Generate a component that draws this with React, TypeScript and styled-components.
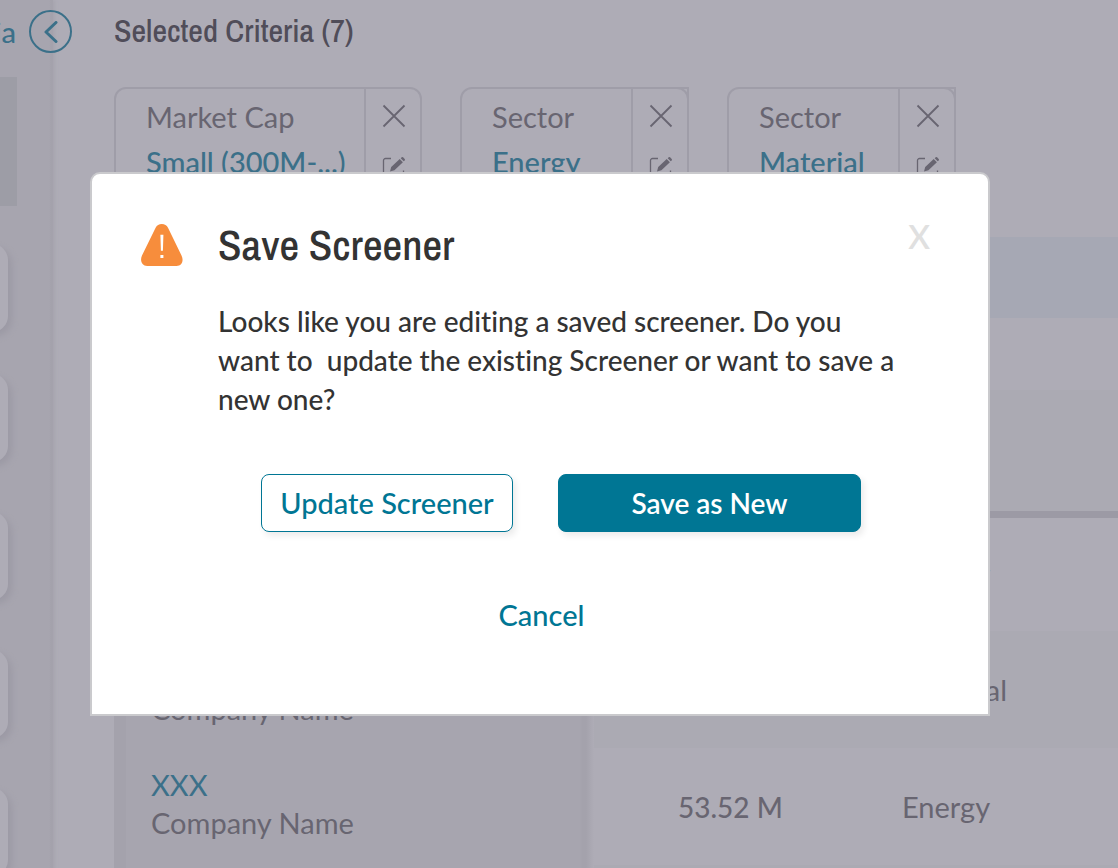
import React from "react";
import styled, { createGlobalStyle, css } from "styled-components";

const color = {
  page: "#aeacb6",
  panel: "#a7a5af",
  panelEdge: "#a4a2ac",
  stripe: "#abaab3",
  block: "#9d9da6",
  line: "#9c9aa5",
  chipLine: "#9f9da8",
  band: "#a6a8b4",
  mutedText: "#686571",
  mutedHeading: "#504d59",
  mutedTeal: "#3b7089",
  teal: "#007694",
  text: "#333333",
  white: "#ffffff",
};

const GlobalStyle = createGlobalStyle`
  *, *::before, *::after { box-sizing: border-box; }
  body {
    margin: 0;
    background: ${color.page};
    color: ${color.mutedText};
    font-family: Lato, "Liberation Sans", sans-serif;
    font-size: 29px;
    font-variant-ligatures: none;
    line-height: 38px;
  }
  button {
    font: inherit;
    padding: 0;
    border: 0;
    background: none;
    cursor: pointer;
  }
`;

const headingFont = css`
  font-family: "Archivo Narrow", "Roboto Condensed", "Liberation Sans", sans-serif;
  font-weight: 500;
  margin: 0;
`;

const Page = styled.div`
  display: grid;
  grid-template-columns: 53px minmax(0, 1fr);
  height: 100vh;
  overflow: hidden;
`;

const Sidebar = styled.aside`
  position: relative;
  z-index: 1;
  background: linear-gradient(to right, ${color.panel} 49px, ${color.panelEdge} 51px);
  box-shadow: 2px 0 3px ${color.panel};
`;

const SidebarHeader = styled.div`
  display: flex;
  align-items: center;
  justify-content: flex-end;
  gap: 13px;
  height: 77px;
  padding-bottom: 14px;
  font-weight: 500;
  color: ${color.mutedTeal};
`;

const CollapseButton = styled.button`
  flex: none;
  display: flex;
  align-items: center;
  justify-content: center;
  width: 43px;
  height: 43px;
  margin-right: -19px;
  border: 2px solid ${color.mutedTeal};
  border-radius: 50%;
  color: ${color.mutedTeal};
`;

const ActiveFilter = styled.div`
  width: 17px;
  height: 129px;
  margin-bottom: 38px;
  background: ${color.block};
`;

const FilterList = styled.div`
  display: grid;
  gap: 50px;
`;

const FilterGroup = styled.div`
  display: grid;
  gap: 42px;
`;

const FilterCard = styled.div`
  width: 48px;
  height: 88px;
  margin-left: -40px;
  border-radius: 16px;
  background: ${color.page};
  box-shadow: 4px 4px 6px ${color.line};
`;

const Main = styled.main`
  padding-left: 61px;
`;

const PageTitle = styled.h1`
  ${headingFont}
  height: 87px;
  padding-top: 12px;
  font-size: 32px;
  color: ${color.mutedHeading};
`;

const ChipRow = styled.div`
  display: flex;
  gap: 38px;
  height: 150px;
`;

const Chip = styled.section<{ $width: number }>`
  display: flex;
  width: ${(p) => p.$width}px;
  height: 112px;
  border: 2px solid ${color.chipLine};
  border-radius: 12px;
`;

const ChipText = styled.div`
  flex: 1;
  padding: 9px 0 0 30px;
  white-space: nowrap;
`;

const ChipLabel = styled.div`
  margin-bottom: 7px;
`;

const ChipValue = styled.div`
  color: ${color.mutedTeal};
  font-weight: 500;
`;

const ChipActions = styled.div<{ $square?: boolean }>`
  display: flex;
  flex-direction: column;
  align-items: center;
  gap: 28px;
  width: 56px;
  padding: 15px 0 0 2px;
  border-left: 2px solid ${color.chipLine};
  ${(p) =>
    p.$square &&
    css`
      width: 58px;
      margin: -2px -2px 0 0;
      border-top: 2px solid ${color.chipLine};
      border-right: 2px solid ${color.chipLine};
    `}
`;

const IconButton = styled.button`
  display: block;
  width: 24px;
  height: 24px;
  color: ${color.mutedText};

  svg { display: block; }
`;

const Band = styled.div`
  height: 81px;
  margin-bottom: 72px;
  background: ${color.band};
`;

const Table = styled.table`
  width: 100%;
  table-layout: fixed;
  border-collapse: collapse;
  text-align: left;
`;

const HeadCell = styled.th<{ $width?: number }>`
  width: ${(p) => (p.$width ? `${p.$width}px` : "auto")};
  height: 124px;
  padding: 0;
  background: ${color.stripe};
  border-bottom: 7px solid ${color.line};
`;

const NameCell = styled.th`
  padding: 0 0 6px 37px;
  font-weight: 400;
  background: linear-gradient(
    to right,
    ${color.panelEdge} 12px,
    ${color.panel} 12px,
    ${color.panel} 466px,
    ${color.panelEdge} 468px,
    ${color.panelEdge} 472px,
    ${color.page}
  );
`;

const Row = styled.tr`
  height: 117px;

  &:nth-child(even) { background: ${color.stripe}; }
  &:nth-child(even) ${NameCell} { padding-bottom: 0; }
`;

const Cell = styled.td`
  padding: 0 0 0 84px;
`;

const Figure = styled.span`
  font-size: 28px;
  font-weight: 500;
`;

const Ticker = styled.a`
  display: block;
  color: ${color.mutedTeal};
  text-decoration: none;
`;

const Overlay = styled.div`
  position: fixed;
  inset: 0;
  z-index: 2;
  padding: 172px 128px 0 90px;
`;

const Dialog = styled.div`
  display: grid;
  grid-template-columns: 42px minmax(0, 1fr);
  column-gap: 35px;
  padding: 50px 58px 80px 49px;
  border: 2px solid #cacacd;
  border-radius: 10px 10px 0 0;
  background: ${color.white};
  color: ${color.text};

  > svg { display: block; }
`;

const DialogHeader = styled.header`
  display: flex;
  justify-content: space-between;
  margin-bottom: 37px;
`;

const DialogTitle = styled.h2`
  ${headingFont}
  font-size: 43px;
  line-height: 41px;
`;

const CloseButton = styled.button`
  height: 24px;
  font-size: 33px;
  font-weight: 600;
  line-height: 24px;
  color: #e0e0e0;
`;

const Message = styled.p`
  max-width: 690px;
  margin: 0 -10px 55px 0;
  font-size: 28px;
  font-weight: 500;
  line-height: 39px;
`;

const ButtonRow = styled.div`
  grid-column: 1 / -1;
  display: flex;
  justify-content: center;
  gap: 45px;
  margin-bottom: 64px;
  padding-left: 51px;
`;

const ActionButton = styled.button<{ $primary?: boolean }>`
  width: ${(p) => (p.$primary ? 303 : 252)}px;
  height: 58px;
  border: 1px solid ${color.teal};
  border-radius: 8px;
  background: ${(p) => (p.$primary ? color.teal : color.white)};
  color: ${(p) => (p.$primary ? color.white : color.teal)};
  font-size: ${(p) => (p.$primary ? 28 : 29)}px;
  font-weight: ${(p) => (p.$primary ? 600 : 500)};
  box-shadow: 3px 4px 6px rgba(0, 0, 0, 0.08);
`;

const CancelButton = styled.button`
  grid-column: 1 / -1;
  justify-self: center;
  margin-left: 12px;
  font-weight: 500;
  color: ${color.teal};
`;

const CrossIcon = () => (
  <svg width="24" height="24" viewBox="0 0 24 24" fill="none" stroke="currentColor" strokeWidth="1.8" aria-hidden="true">
    <path d="M1.5 1.5l21 21M22.5 1.5l-21 21" />
  </svg>
);

const EditIcon = () => (
  <svg width="24" height="24" viewBox="0 0 24 24" aria-hidden="true">
    <path d="M9 2.500H3.500a2 2 0 0 0-2 2v15a2 2 0 0 0 2 2h16a2 2 0 0 0 2-2v-5" fill="none" stroke="currentColor" strokeWidth="1.300" />
    <path d="M8 15.500l1.200-4.500 8.500-8 3.200 3.300-8.500 8zM18.700 2.200l1-.9a1 1 0 0 1 1.400 0l1.600 1.700a1 1 0 0 1 0 1.400l-1 .9z" fill="currentColor" />
  </svg>
);

const WarningIcon = () => (
  <svg width="42" height="42" viewBox="0 0 42 42" aria-hidden="true">
    <path d="M14.600 3.800a7 7 0 0 1 12.400 0L40.500 31.500C43 36.500 41 42 35.500 42H6.200C.8 42-1.300 36.500 1 31.500z" fill="#f78d3c" />
    <path d="M19.400 10.800h3l-.5 16h-2zM19.400 31h3v3h-3z" fill="#fff" />
  </svg>
);

const criteria = [
  { label: "Market Cap", value: "Small (300M-...)", width: 308, square: false },
  { label: "Sector", value: "Energy", width: 229, square: true },
  { label: "Sector", value: "Material", width: 229, square: true },
];

const sectors = ["Energy", "Material", "Energy"];

export default function App() {
  return (
    <>
      <GlobalStyle />
      <Page>
        <Sidebar>
          <SidebarHeader>
            <span>Criteria</span>
            <CollapseButton type="button" aria-label="Collapse criteria">
              <svg width="14" height="22" viewBox="0 0 14 22" fill="none" stroke="currentColor" strokeWidth="3" strokeLinecap="round" strokeLinejoin="round" aria-hidden="true">
                <path d="M12 1.500L2 11l10 9.500" />
              </svg>
            </CollapseButton>
          </SidebarHeader>
          <ActiveFilter />
          <FilterList>
            <FilterGroup>
              <FilterCard />
              <FilterCard />
            </FilterGroup>
            <FilterCard />
            <FilterCard />
            <FilterCard />
          </FilterList>
        </Sidebar>
        <Main>
          <PageTitle>Selected Criteria (7)</PageTitle>
          <ChipRow>
            {criteria.map((c) => (
              <Chip key={c.value} $width={c.width}>
                <ChipText>
                  <ChipLabel>{c.label}</ChipLabel>
                  <ChipValue>{c.value}</ChipValue>
                </ChipText>
                <ChipActions $square={c.square}>
                  <IconButton type="button" aria-label={`Remove ${c.value}`}>
                    <CrossIcon />
                  </IconButton>
                  <IconButton type="button" aria-label={`Edit ${c.value}`}>
                    <EditIcon />
                  </IconButton>
                </ChipActions>
              </Chip>
            ))}
          </ChipRow>
          <Band />
          <Table>
            <thead>
              <tr>
                <HeadCell scope="col" $width={480} aria-label="Company" />
                <HeadCell scope="col" $width={224} aria-label="Market cap" />
                <HeadCell scope="col" aria-label="Sector" />
              </tr>
            </thead>
            <tbody>
              {sectors.map((sector, i) => (
                <Row key={i}>
                  <NameCell scope="row">
                    <Ticker href="#company">XXX</Ticker>
                    Company Name
                  </NameCell>
                  <Cell>
                    <Figure>53.52 M</Figure>
                  </Cell>
                  <Cell>{sector}</Cell>
                </Row>
              ))}
              <Row>
                <NameCell as="td" />
                <Cell />
                <Cell />
              </Row>
            </tbody>
          </Table>
        </Main>
      </Page>
      <Overlay>
        <Dialog role="dialog" aria-modal="true" aria-labelledby="save-title">
          <WarningIcon />
          <div>
            <DialogHeader>
              <DialogTitle id="save-title">Save Screener</DialogTitle>
              <CloseButton type="button" aria-label="Close">X</CloseButton>
            </DialogHeader>
            <Message>
              Looks like you are editing a saved screener. Do you want to&nbsp; update the existing
              Screener or want to save a new one?
            </Message>
          </div>
          <ButtonRow>
            <ActionButton type="button">Update Screener</ActionButton>
            <ActionButton type="button" $primary>Save as New</ActionButton>
          </ButtonRow>
          <CancelButton type="button">Cancel</CancelButton>
        </Dialog>
      </Overlay>
    </>
  );
}
